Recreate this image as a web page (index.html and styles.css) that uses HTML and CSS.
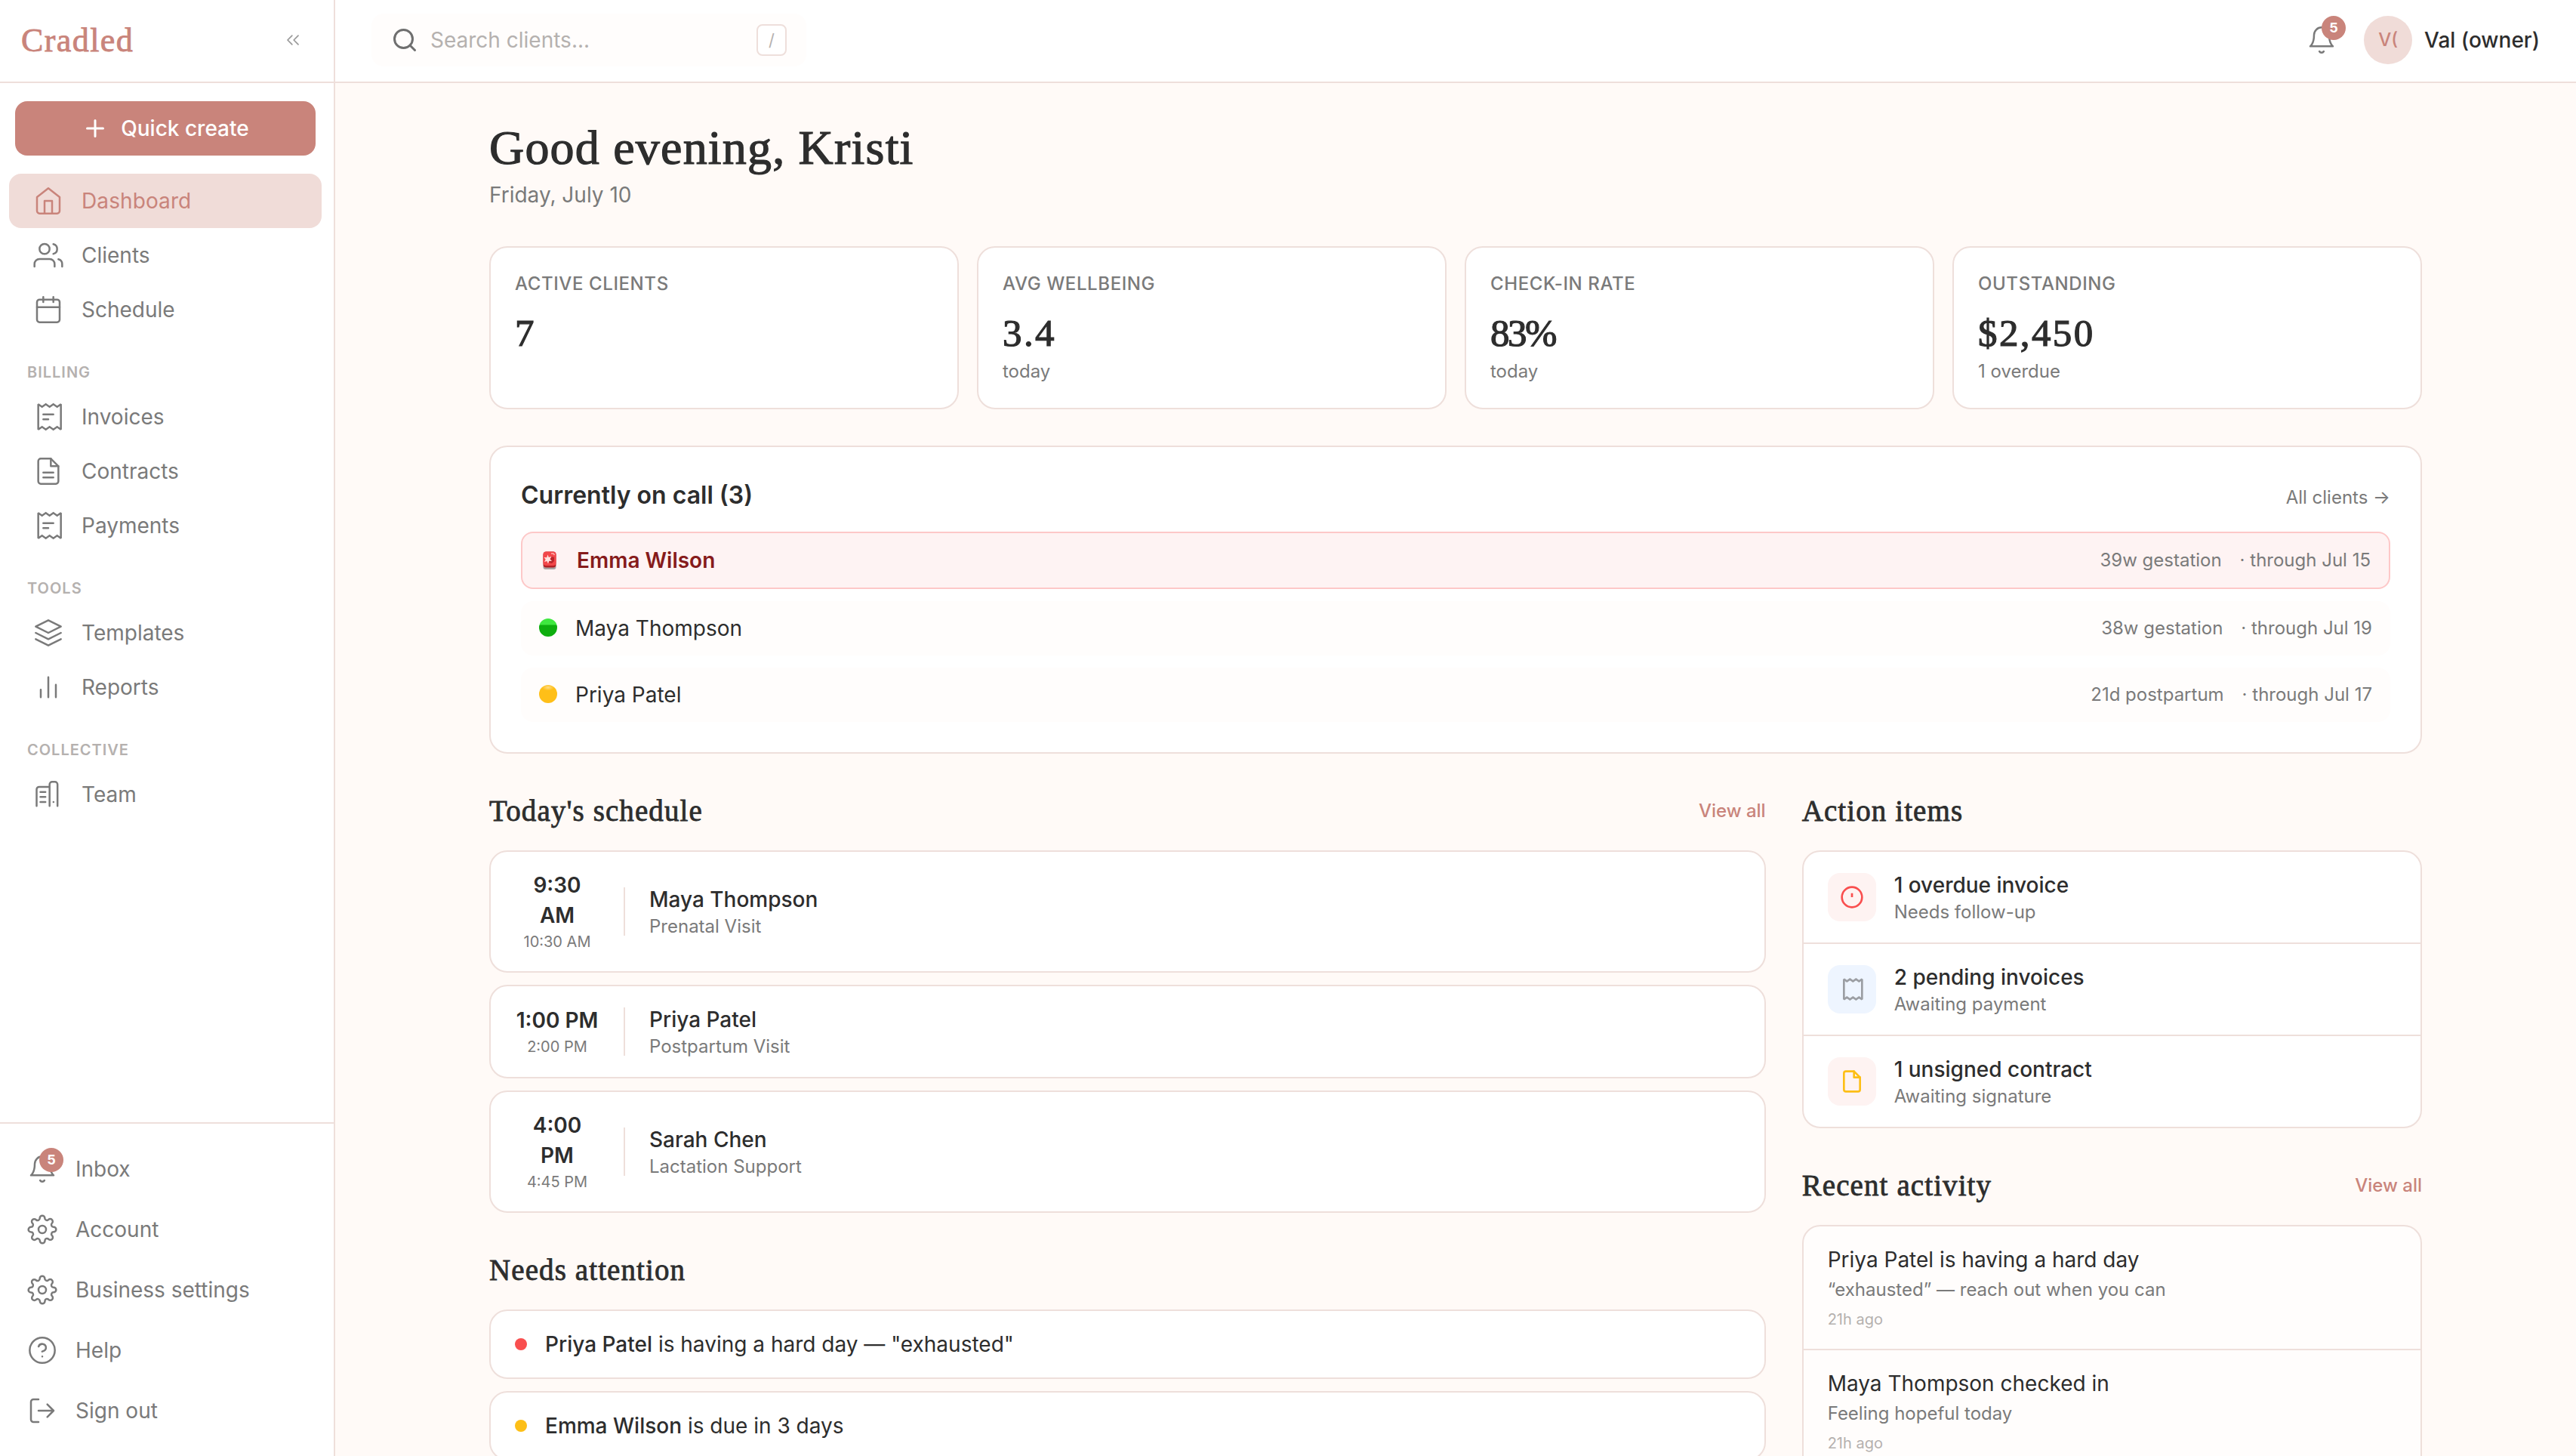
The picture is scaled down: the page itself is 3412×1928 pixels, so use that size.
FILE: index.html
```html
<!DOCTYPE html>
<html lang="en">
<head>
  <meta charset="UTF-8">
  <meta name="viewport" content="width=device-width, initial-scale=1.0">
  <title>Cradled - Dashboard</title>
  <link rel="stylesheet" href="styles.css">
</head>
<body>

<!-- shared icons -->
<svg class="sprite" aria-hidden="true">
  <symbol id="i-bell" viewBox="0 0 24 24"><path d="M18 8A6 6 0 0 0 6 8c0 7-3 9-3 9h18s-3-2-3-9"/><path d="M13.73 21a2 2 0 0 1-3.46 0"/></symbol>
  <symbol id="i-receipt" viewBox="0 0 24 24"><path class="sharp" d="M4 2v20l3-2 3 2 3-2 3 2 3-2 3 2V2l-3 2-3-2-3 2-3-2-3 2-3-2z"/><path d="M8 10h8M8 14h4"/></symbol>
  <symbol id="i-gear" viewBox="0 0 24 24"><circle cx="12" cy="12" r="3"/><path d="M19.4 15a1.65 1.65 0 0 0 .33 1.82l.06.06a2 2 0 0 1 0 2.83 2 2 0 0 1-2.83 0l-.06-.06a1.65 1.65 0 0 0-1.82-.33 1.65 1.65 0 0 0-1 1.51V21a2 2 0 0 1-2 2 2 2 0 0 1-2-2v-.09A1.65 1.65 0 0 0 9 19.4a1.65 1.65 0 0 0-1.82.33l-.06.06a2 2 0 0 1-2.83 0 2 2 0 0 1 0-2.83l.06-.06a1.65 1.65 0 0 0 .33-1.82 1.65 1.65 0 0 0-1.51-1H3a2 2 0 0 1-2-2 2 2 0 0 1 2-2h.09A1.65 1.65 0 0 0 4.6 9a1.65 1.65 0 0 0-.33-1.82l-.06-.06a2 2 0 0 1 0-2.83 2 2 0 0 1 2.83 0l.06.06a1.65 1.65 0 0 0 1.82.33H9a1.65 1.65 0 0 0 1-1.51V3a2 2 0 0 1 2-2 2 2 0 0 1 2 2v.09a1.65 1.65 0 0 0 1 1.51 1.65 1.65 0 0 0 1.82-.33l.06-.06a2 2 0 0 1 2.83 0 2 2 0 0 1 0 2.83l-.06.06a1.65 1.65 0 0 0-.33 1.82V9a1.65 1.65 0 0 0 1.51 1H21a2 2 0 0 1 2 2 2 2 0 0 1-2 2h-.09a1.65 1.65 0 0 0-1.51 1z"/></symbol>
</svg>

<div class="app">
  <aside class="sidebar">
    <div class="sidebar-header">
      <span class="brand">Cradled</span>
      <svg class="icon collapse" viewBox="0 0 24 24"><path d="M11 17l-5-5 5-5M18 17l-5-5 5-5"/></svg>
    </div>

    <button class="quick-create">
      <svg class="icon" viewBox="0 0 24 24"><path d="M12 5v14M5 12h14"/></svg>
      Quick create
    </button>

    <nav class="nav">
      <a class="nav-item active">
        <svg class="icon" viewBox="0 0 24 24"><path d="M3 9l9-7 9 7v11a2 2 0 0 1-2 2H5a2 2 0 0 1-2-2z"/><path d="M9 22V12h6v10"/></svg>
        Dashboard
      </a>
      <a class="nav-item">
        <svg class="icon" viewBox="0 0 24 24"><path d="M17 21v-2a4 4 0 0 0-4-4H5a4 4 0 0 0-4 4v2"/><circle cx="9" cy="7" r="4"/><path d="M23 21v-2a4 4 0 0 0-3-3.87M16 3.13a4 4 0 0 1 0 7.75"/></svg>
        Clients
      </a>
      <a class="nav-item">
        <svg class="icon" viewBox="0 0 24 24"><rect x="3" y="4" width="18" height="18" rx="2"/><path d="M16 2v4M8 2v4M3 10h18"/></svg>
        Schedule
      </a>

      <div class="nav-label">Billing</div>
      <a class="nav-item">
        <svg class="icon"><use href="#i-receipt"/></svg>
        Invoices
      </a>
      <a class="nav-item">
        <svg class="icon" viewBox="0 0 24 24"><path d="M14 2H6a2 2 0 0 0-2 2v16a2 2 0 0 0 2 2h12a2 2 0 0 0 2-2V8z"/><path d="M14 2v6h6M8 13h8M8 17h8"/></svg>
        Contracts
      </a>
      <a class="nav-item">
        <svg class="icon"><use href="#i-receipt"/></svg>
        Payments
      </a>

      <div class="nav-label">Tools</div>
      <a class="nav-item">
        <svg class="icon" viewBox="0 0 24 24"><path d="M12 2L2 7l10 5 10-5-10-5zM2 17l10 5 10-5M2 12l10 5 10-5"/></svg>
        Templates
      </a>
      <a class="nav-item">
        <svg class="icon" viewBox="0 0 24 24"><path d="M6 20v-6M12 20V4M18 20V10"/></svg>
        Reports
      </a>

      <div class="nav-label">Collective</div>
      <a class="nav-item">
        <svg class="icon" viewBox="0 0 24 24"><path d="M2.7 21.2V8a2 2 0 0 1 2-2H13M13 21.2V4a2 2 0 0 1 2-2h2.3a2 2 0 0 1 2 2v17.2"/><path d="M5.7 10h4M5.7 14h4M5.7 18h4M16.1 18h.01"/></svg>
        Team
      </a>
    </nav>

    <div class="sidebar-footer">
      <a class="footer-item">
        <span class="bell"><svg class="icon"><use href="#i-bell"/></svg><span class="badge">5</span></span>
        Inbox
      </a>
      <a class="footer-item"><svg class="icon"><use href="#i-gear"/></svg>Account</a>
      <a class="footer-item"><svg class="icon"><use href="#i-gear"/></svg>Business settings</a>
      <a class="footer-item">
        <svg class="icon" viewBox="0 0 24 24"><circle cx="12" cy="12" r="10"/><path d="M9.09 9a3 3 0 0 1 5.83 1c0 2-3 3-3 3M12 17h.01"/></svg>
        Help
      </a>
      <a class="footer-item">
        <svg class="icon" viewBox="0 0 24 24"><path d="M9 21H5a2 2 0 0 1-2-2V5a2 2 0 0 1 2-2h4M16 17l5-5-5-5M21 12H9"/></svg>
        Sign out
      </a>
    </div>
  </aside>

  <div class="page">
    <header class="topbar">
      <div class="search">
        <svg class="icon" viewBox="0 0 24 24"><circle cx="11" cy="11" r="8"/><path d="M21 21l-4.35-4.35"/></svg>
        <span class="search-text">Search clients...</span>
        <span class="kbd">/</span>
      </div>
      <div class="user">
        <span class="bell"><svg class="icon"><use href="#i-bell"/></svg><span class="badge">5</span></span>
        <span class="avatar">V(</span>
        <span class="user-name">Val (owner)</span>
      </div>
    </header>

    <main class="content">
      <h1>Good evening, Kristi</h1>
      <p class="date">Friday, July 10</p>

      <section class="stats">
        <div class="card stat">
          <div class="stat-label">Active clients</div>
          <div class="stat-value">7</div>
        </div>
        <div class="card stat">
          <div class="stat-label">Avg wellbeing</div>
          <div class="stat-value">3.4</div>
          <div class="stat-sub">today</div>
        </div>
        <div class="card stat">
          <div class="stat-label">Check-in rate</div>
          <div class="stat-value percent">83%</div>
          <div class="stat-sub">today</div>
        </div>
        <div class="card stat">
          <div class="stat-label">Outstanding</div>
          <div class="stat-value">$2,450</div>
          <div class="stat-sub">1 overdue</div>
        </div>
      </section>

      <section class="card on-call">
        <div class="on-call-header">
          <h3>Currently on call (3)</h3>
          <a>All clients →</a>
        </div>
        <div class="call-row urgent">
          <svg class="call-icon" viewBox="0 0 24 24">
            <rect x="3.5" y="17" width="17" height="7" rx="3" fill="#a9a3a3"/>
            <rect x="3.5" y="0.5" width="17" height="21" rx="4" fill="#b32025"/>
            <rect x="3.5" y="0.5" width="17" height="18.5" rx="4" fill="#f2474a"/>
            <path d="M14 7l4 1v5l-3 3-4-1z" fill="#b9262b"/>
            <path d="M9.5 4.5l1.3 3.5 3.7-1-2 3.3 2.5 2.7-3.7-.3-1.3 3.8-1.5-3.5-3.5 1 1.7-3.2L4.500 8l3.700.2z" fill="#ffe3e0"/>
            <path d="M14 3h3l1.500 2" stroke="#ffb3b0" stroke-width="1.500" fill="none"/>
          </svg>
          <span class="call-name">Emma Wilson</span>
          <span class="call-meta">39w gestation</span>
          <span class="call-meta">· through Jul 15</span>
        </div>
        <div class="call-row">
          <span class="call-icon green"></span>
          <span class="call-name">Maya Thompson</span>
          <span class="call-meta">38w gestation</span>
          <span class="call-meta">· through Jul 19</span>
        </div>
        <div class="call-row">
          <span class="call-icon yellow"></span>
          <span class="call-name">Priya Patel</span>
          <span class="call-meta">21d postpartum</span>
          <span class="call-meta">· through Jul 17</span>
        </div>
      </section>

      <div class="columns">
        <div class="col-main">
          <div class="section-header">
            <h2>Today's schedule</h2>
            <a>View all</a>
          </div>
          <div class="stack">
            <div class="card visit">
              <div class="visit-time"><strong>9:30<br>AM</strong><small>10:30 AM</small></div>
              <div class="visit-divider"></div>
              <div class="two-line"><b>Maya Thompson</b><span>Prenatal Visit</span></div>
            </div>
            <div class="card visit">
              <div class="visit-time"><strong>1:00 PM</strong><small>2:00 PM</small></div>
              <div class="visit-divider"></div>
              <div class="two-line"><b>Priya Patel</b><span>Postpartum Visit</span></div>
            </div>
            <div class="card visit">
              <div class="visit-time"><strong>4:00<br>PM</strong><small>4:45 PM</small></div>
              <div class="visit-divider"></div>
              <div class="two-line"><b>Sarah Chen</b><span>Lactation Support</span></div>
            </div>
          </div>

          <div class="section-header">
            <h2>Needs attention</h2>
          </div>
          <div class="stack">
            <div class="card attention">
              <span class="dot red"></span>
              <p><b>Priya Patel</b> is having a hard day — "exhausted"</p>
            </div>
            <div class="card attention">
              <span class="dot amber"></span>
              <p><b>Emma Wilson</b> is due in 3 days</p>
            </div>
          </div>
        </div>

        <div class="col-side">
          <div class="section-header">
            <h2>Action items</h2>
          </div>
          <div class="card list">
            <div class="list-row action">
              <span class="action-icon overdue"><svg class="icon" viewBox="0 0 24 24"><circle cx="12" cy="12" r="10"/><path class="flat" d="M12 8v4"/></svg></span>
              <div class="two-line"><b>1 overdue invoice</b><span>Needs follow-up</span></div>
            </div>
            <div class="list-row action">
              <span class="action-icon pending"><svg class="icon" viewBox="0 0 24 24"><path class="sharp" d="M4 2v20l3-2 3 2 3-2 3 2 3-2 3 2V2l-3 2-3-2-3 2-3-2-3 2-3-2z"/></svg></span>
              <div class="two-line"><b>2 pending invoices</b><span>Awaiting payment</span></div>
            </div>
            <div class="list-row action">
              <span class="action-icon unsigned"><svg class="icon" viewBox="0 0 24 24"><path d="M14 2H6a2 2 0 0 0-2 2v16a2 2 0 0 0 2 2h12a2 2 0 0 0 2-2V8z"/><path d="M14 2v6h6"/></svg></span>
              <div class="two-line"><b>1 unsigned contract</b><span>Awaiting signature</span></div>
            </div>
          </div>

          <div class="section-header">
            <h2>Recent activity</h2>
            <a>View all</a>
          </div>
          <div class="card list activity">
            <div class="list-row">
              <p class="activity-title">Priya Patel is having a hard day</p>
              <p class="activity-text">“exhausted” — reach out when you can</p>
              <p class="activity-ago">21h ago</p>
            </div>
            <div class="list-row">
              <p class="activity-title">Maya Thompson checked in</p>
              <p class="activity-text">Feeling hopeful today</p>
              <p class="activity-ago">21h ago</p>
            </div>
          </div>
        </div>
      </div>
    </main>
  </div>
</div>

</body>
</html>
```
FILE: styles.css
```css
:root {
  --rose: #c9847b;
  --rose-light: #f0dcd8;
  --border: #eedfdb;
  --bg: #fffaf7;
  --soft: #fffdfc;
  --text: #2d2d2d;
  --muted: #7a7a7a;
  --faint: #b5b1af;
  --serif: "Liberation Serif", serif;
}

* {
  box-sizing: border-box;
}

body {
  margin: 0;
  font-family: Inter, sans-serif;
  font-size: 28px;
  line-height: 40px;
  color: var(--text);
  background-color: var(--bg);
}

h1, h2, h3, p {
  margin: 0;
}

.sprite {
  display: none;
}

.icon {
  width: 40px;
  height: 40px;
  flex-shrink: 0;
  display: block;
  fill: none;
  stroke: currentColor;
  stroke-width: 1.5;
  stroke-linecap: round;
  stroke-linejoin: round;
}

.sharp {
  stroke-linejoin: miter;
  stroke-miterlimit: 2;
}

.flat {
  stroke-linecap: butt;
}

.app {
  display: flex;
  height: 1928px;
  overflow: hidden;
}

/* sidebar */
.sidebar {
  width: 444px;
  flex-shrink: 0;
  display: flex;
  flex-direction: column;
  background-color: white;
  border-right: 2px solid var(--border);
  color: var(--muted);
}

.sidebar-header {
  height: 110px;
  flex-shrink: 0;
  display: flex;
  align-items: center;
  justify-content: space-between;
  padding: 0 40px 2px 28px;
  border-bottom: 2px solid var(--border);
}

.brand {
  padding-top: 2px;
  font-family: var(--serif);
  font-size: 44px;
  letter-spacing: 1.4px;
  color: var(--rose);
  -webkit-text-stroke: 0.8px var(--rose);
}

.collapse {
  width: 28px;
  height: 28px;
  color: #9a9a9a;
}

.quick-create {
  display: flex;
  align-items: center;
  justify-content: center;
  gap: 16px;
  height: 72px;
  flex-shrink: 0;
  margin: 24px 24px 24px 20px;
  padding: 0;
  border: none;
  border-radius: 16px;
  background-color: var(--rose);
  color: white;
  font-family: inherit;
  font-size: 28px;
  font-weight: 500;
}

.quick-create .icon {
  width: 36px;
  height: 36px;
  stroke-width: 2;
}

.nav {
  flex: 1;
  padding: 0 16px 0 12px;
}

.nav-item {
  display: flex;
  align-items: center;
  gap: 24px;
  height: 72px;
  padding: 0 32px;
  border-radius: 16px;
}

.nav-item.active {
  background-color: var(--rose-light);
  color: var(--rose);
  letter-spacing: 0.1px;
}

.nav-label {
  padding: 32px 24px 8px;
  font-size: 20px;
  line-height: 30px;
  font-weight: 600;
  letter-spacing: 1px;
  text-transform: uppercase;
  color: var(--faint);
}

.sidebar-footer {
  border-top: 2px solid var(--border);
  padding: 20px 36px;
}

.footer-item {
  display: flex;
  align-items: center;
  gap: 24px;
  height: 80px;
}

.bell {
  position: relative;
}

.badge {
  position: absolute;
  top: -8px;
  right: -8px;
  width: 32px;
  height: 32px;
  border-radius: 50%;
  background-color: var(--rose);
  color: white;
  font-size: 18px;
  line-height: 32px;
  font-weight: 700;
  text-align: center;
}

/* top bar */
.page {
  flex: 1;
  min-width: 0;
}

.topbar {
  height: 110px;
  display: flex;
  align-items: center;
  justify-content: space-between;
  padding: 0 48px 2px;
  background-color: white;
  border-bottom: 2px solid var(--border);
}

.search {
  display: flex;
  align-items: center;
  gap: 16px;
  width: 576px;
  height: 70px;
  padding: 0 26px;
  border-radius: 16px;
  background-color: var(--soft);
  color: var(--faint);
}

.search .icon {
  width: 36px;
  height: 36px;
  color: #6f6f6f;
  stroke-width: 2;
}

.search-text {
  flex: 1;
}

.kbd {
  width: 40px;
  height: 42px;
  border: 2px solid var(--border);
  border-radius: 8px;
  background-color: white;
  font-size: 22px;
  line-height: 38px;
  text-align: center;
}

.user {
  display: flex;
  align-items: center;
}

.user .bell {
  color: var(--muted);
  margin-right: 36px;
}

.user .badge {
  top: -12px;
  right: -12px;
}

.avatar {
  width: 64px;
  height: 64px;
  margin-right: 16px;
  border-radius: 50%;
  background-color: var(--rose-light);
  color: var(--rose);
  font-size: 24px;
  line-height: 64px;
  font-weight: 500;
  text-align: center;
}

.user-name {
  font-weight: 500;
}

/* content */
.content {
  width: 2560px;
  margin: 0 auto;
  padding-top: 50px;
}

h1 {
  font-family: var(--serif);
  font-size: 64px;
  font-weight: 400;
  line-height: 72px;
  letter-spacing: 1.2px;
  -webkit-text-stroke: 1.2px var(--text);
}

.date {
  margin-top: 6px;
  color: var(--muted);
}

.card {
  background-color: white;
  border: 2px solid var(--border);
  border-radius: 24px;
}

.stats {
  display: grid;
  grid-template-columns: repeat(4, 1fr);
  gap: 24px;
  margin-top: 48px;
}

.stat {
  height: 216px;
  padding: 33px 32px 31px;
}

.stat-label {
  font-size: 24px;
  line-height: 30px;
  font-weight: 500;
  letter-spacing: 0.6px;
  text-transform: uppercase;
  color: var(--muted);
}

.stat-value {
  margin-top: 14px;
  font-family: var(--serif);
  font-size: 51px;
  line-height: 72px;
  letter-spacing: 2.4px;
  -webkit-text-stroke: 1.2px var(--text);
}

.stat-value.percent {
  letter-spacing: -2.5px;
}

.stat-sub {
  font-size: 24px;
  line-height: 30px;
  color: var(--muted);
}

/* on call */
.on-call {
  display: flex;
  flex-direction: column;
  gap: 16px;
  margin-top: 48px;
  padding: 40px;
}

.on-call-header {
  display: flex;
  align-items: baseline;
  justify-content: space-between;
  margin-bottom: 8px;
}

.on-call-header h3 {
  font-size: 32px;
  line-height: 48px;
  font-weight: 600;
}

.on-call-header a {
  font-size: 24px;
  line-height: 32px;
  color: var(--muted);
}

.call-row {
  display: flex;
  align-items: center;
  gap: 24px;
  height: 72px;
  padding: 0 24px;
  border-radius: 16px;
  background-color: var(--soft);
}

.call-row.urgent {
  height: 76px;
  border: 2px solid #fdc8c8;
  background-color: #fef3f3;
}

.urgent .call-name {
  font-weight: 600;
  color: #861b1b;
}

.call-icon {
  width: 24px;
  height: 24px;
}

.call-icon.green,
.call-icon.yellow {
  margin-top: -2px;
  border-radius: 50%;
}

.call-icon.green {
  background: linear-gradient(#3fe83f 8px, #0eae0e 9px);
}

.call-icon.yellow {
  background: radial-gradient(ellipse 8px 4px at 50% 14%, #ffdc85, #ffbf18);
}

.call-name {
  flex: 1;
}

.call-meta {
  font-size: 24px;
  color: var(--muted);
}

/* two column area */
.columns {
  display: grid;
  grid-template-columns: repeat(3, 1fr);
  gap: 48px;
}

.col-main {
  grid-column: span 2;
}

.section-header {
  display: flex;
  align-items: center;
  justify-content: space-between;
  margin: 48px 0 24px;
}

.section-header h2 {
  font-family: var(--serif);
  font-size: 39px;
  line-height: 56px;
  font-weight: 400;
  letter-spacing: 1.1px;
  -webkit-text-stroke: 0.8px var(--text);
}

.section-header a {
  font-size: 24px;
  font-weight: 500;
  color: var(--rose);
}

.stack {
  display: flex;
  flex-direction: column;
  gap: 16px;
}

.visit {
  display: flex;
  align-items: center;
  gap: 32px;
  padding: 24px 32px;
}

.visit-time {
  width: 112px;
  text-align: center;
}

.visit-time strong {
  display: block;
  font-weight: 600;
}

.visit-time small {
  display: block;
  font-size: 20px;
  line-height: 30px;
  color: var(--muted);
}

.visit-divider {
  width: 2px;
  height: 64px;
  background-color: var(--border);
}

.two-line b,
.two-line span {
  display: block;
}

.two-line b {
  font-weight: 500;
}

.two-line span {
  font-size: 24px;
  line-height: 32px;
  color: var(--muted);
}

.attention {
  display: flex;
  align-items: center;
  gap: 24px;
  height: 92px;
  padding: 0 32px;
}

.attention b {
  font-weight: 500;
}

.dot {
  width: 16px;
  height: 16px;
  border-radius: 50%;
}

.dot.red {
  background-color: #f94f4f;
}

.dot.amber {
  background-color: #fdbf17;
}

.list {
  overflow: hidden;
}

.list-row {
  padding: 24px 32px;
}

.list-row + .list-row {
  border-top: 2px solid var(--border);
}

.action {
  display: flex;
  align-items: center;
  gap: 24px;
}

.action-icon {
  display: flex;
  align-items: center;
  justify-content: center;
  width: 64px;
  height: 64px;
  border-radius: 16px;
  background-color: #fef3f2;
}

.action-icon .icon {
  width: 32px;
  height: 32px;
  stroke-width: 2;
}

.action-icon.overdue {
  color: #f94f4f;
}

.action-icon.pending {
  color: #9b9ea3;
  background-color: #eef5ff;
}

.action-icon.unsigned {
  color: #fdbf17;
}

.activity {
  background-color: var(--soft);
}

.activity-text {
  margin-top: 4px;
  font-size: 24px;
  line-height: 32px;
  color: var(--muted);
}

.activity-ago {
  margin-top: 8px;
  font-size: 20px;
  line-height: 30px;
  color: var(--faint);
}
```
